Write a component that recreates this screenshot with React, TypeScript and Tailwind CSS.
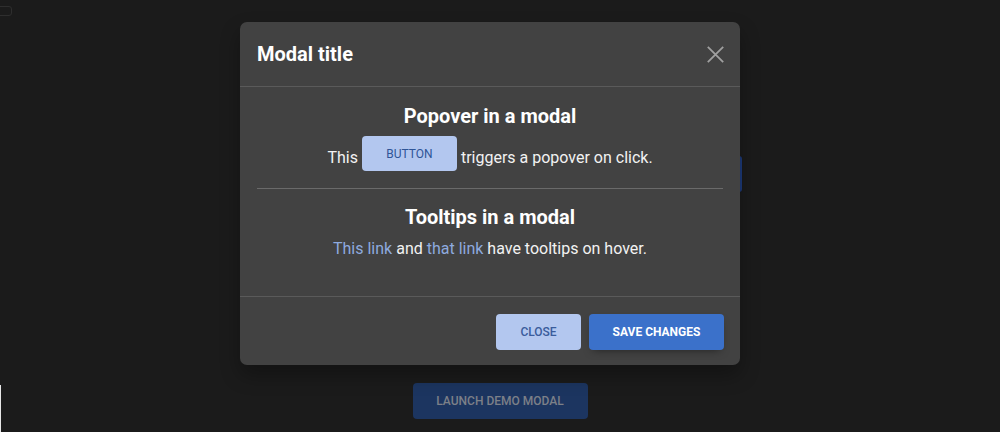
import React from "react";

export default function App() {
  return (
    <div
      className="relative h-[432px] w-[1000px] overflow-hidden bg-[#1b1b1b]"
      style={{ fontFamily: "Roboto, 'Liberation Sans', sans-serif" }}
    >
      {/* background artifacts */}
      <div className="absolute left-[-4px] top-[6px] h-[10px] w-[16px] rounded-[3px] border border-[#2e2e2e]" />
      <div className="absolute left-0 top-[385px] h-[47px] w-px bg-[#e6e6e6]" />
      <div className="absolute left-[700px] top-[156px] h-[36px] w-[42px] rounded-[3px] bg-[#1d3a78]" />

      <div className="flex flex-col items-center">
        {/* Modal */}
        <div className="relative z-10 mr-[20px] mt-[22px] w-[500px] rounded-[7px] bg-[#424242] text-white shadow-[0_10px_20px_rgba(0,0,0,0.3)]">
          <div className="flex h-[65px] items-center justify-between border-b border-[#5a5a5a] pl-[17px] pr-[16px]">
            <h5 className="text-[20px] font-bold leading-[32px] text-white">Modal title</h5>
            <svg width="17" height="17" viewBox="0 0 17 17" className="mt-[1px]">
              <path d="M0.8 0.8 L16.2 16.2 M16.2 0.8 L0.8 16.2" stroke="#a0a0a0" strokeWidth="1.8" fill="none" />
            </svg>
          </div>
          <div className="px-[17px] pb-[19px] pt-[17px] text-center">
            <h5 className="mb-[8px] text-[20px] font-bold leading-[24px] text-white">Popover in a modal</h5>
            <p className="mb-[17px] flex items-center justify-center text-[16px] leading-[24px] text-[#f2f2f2]">
              <span className="pt-[9px]">This</span>
              <span className="mx-[4px] inline-flex h-[35px] w-[95px] items-center justify-center rounded-[4px] bg-[#b3c7ef] pt-[1px] text-[12px] font-normal text-[#2f5597]">
                BUTTON
              </span>
              <span className="pt-[9px]">triggers a popover on click.</span>
            </p>
            <div className="h-px bg-[#6a6a6a]" />
            <h5 className="mb-[8px] mt-[16px] text-[20px] font-bold leading-[24px] text-white">Tooltips in a modal</h5>
            <p className="mb-[16px] text-[16px] leading-[24px] text-[#f2f2f2]">
              <span className="text-[#8eaadf]">This link</span> and{" "}
              <span className="text-[#8eaadf]">that link</span> have tooltips on hover.
            </p>
          </div>
          <div className="flex h-[69px] items-center justify-end gap-[8px] border-t border-[#5a5a5a] pr-[16px]">
            <button className="mt-[1px] h-[36px] w-[85px] rounded-[4px] bg-[#b3c7ef] text-[12px] font-medium text-[#3a5c9c]">
              CLOSE
            </button>
            <button className="mt-[1px] h-[36px] w-[135px] rounded-[4px] bg-[#3b71ca] text-[12px] font-bold text-white shadow-[0_4px_9px_-4px_rgba(0,0,0,0.5)]">
              SAVE CHANGES
            </button>
          </div>
        </div>

        <button className="mt-[18px] h-[36px] w-[175px] rounded-[4px] bg-[#1c3560] text-[12px] font-medium text-[#7c8088]">
          LAUNCH DEMO MODAL
        </button>
      </div>
    </div>
  );
}
